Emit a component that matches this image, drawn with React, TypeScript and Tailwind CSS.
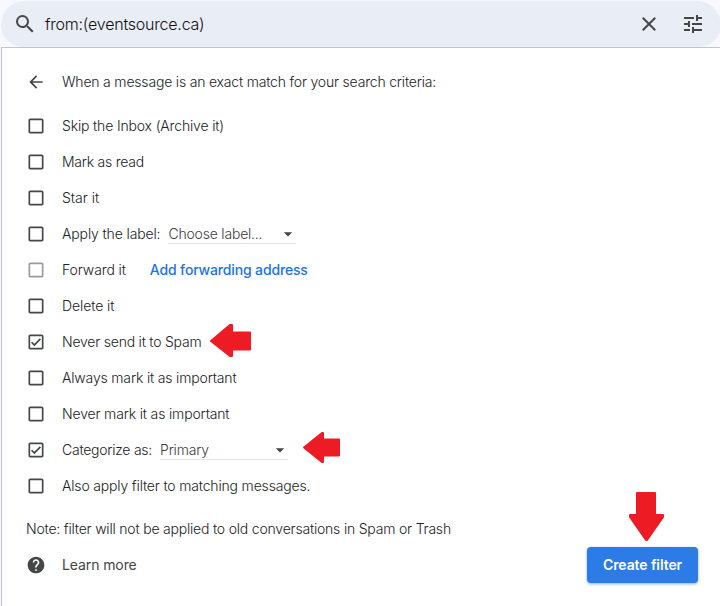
import type { ReactNode } from 'react';
import {
  MdArrowBack,
  MdArrowDropDown,
  MdCheckBoxOutlineBlank,
  MdClose,
  MdHelp,
  MdOutlineCheckBox,
  MdSearch,
  MdTune,
} from 'react-icons/md';

type RowProps = {
  label: string;
  tracking: string;
  checked?: boolean;
  disabled?: boolean;
  children?: ReactNode;
};

function Row({ label, tracking, checked, disabled, children }: RowProps) {
  const Box = checked ? MdOutlineCheckBox : MdCheckBoxOutlineBlank;

  return (
    <div className="flex h-9 items-center">
      <Box className={`mr-4 size-5 shrink-0 ${disabled ? 'text-[#9b9b9b]' : 'text-[#444746]'}`} />
      <span className={`whitespace-nowrap ${tracking}`}>{label}</span>
      {children}
    </div>
  );
}

function Select({ value }: { value: string }) {
  return (
    <div className="ml-2 flex h-5 w-32 items-center justify-between border-b border-[#e4e4e4] tracking-[-0.2px] text-[#3c3c3c]">
      <span className="whitespace-nowrap">{value}</span>
      <MdArrowDropDown className="-mr-0.5 size-5 text-[#444746]" />
    </div>
  );
}

function Arrow({ points, className }: { points: string; className: string }) {
  return (
    <svg className={`absolute overflow-visible ${className}`} fill="#ed1c24" stroke="#ed1c24" strokeWidth="2" strokeLinejoin="round">
      <polygon points={points} />
    </svg>
  );
}

export default function App() {
  return (
    <div className="relative flex h-[606px] w-[720px] flex-col overflow-hidden bg-[#f7f9fe] pt-px font-['Inter',sans-serif] text-sm font-light text-[#222222]">
      <div className="ml-px flex h-[46px] w-[720px] shrink-0 items-center rounded-[24px] rounded-b-[22px] bg-[#e9edf6] pl-3 pr-4 text-[#444746]">
        <MdSearch className="size-6" />
        <span className="ml-2 flex-1 text-base tracking-[-0.22px] text-[#111111]">from:(eventsource.ca)</span>
        <MdClose className="mr-5 size-6" />
        <MdTune className="size-6" />
      </div>

      <div className="ml-px flex flex-1 flex-col border-l border-t border-[#c4c5ca] bg-white pl-6 pt-4">
        <div className="mb-2 flex h-9 items-center">
          <MdArrowBack className="mr-4 size-5 text-[#444746]" />
          <span className="tracking-[-0.19px]">When a message is an exact match for your search criteria:</span>
        </div>

        <Row label="Skip the Inbox (Archive it)" tracking="tracking-[-0.16px]" />
        <Row label="Mark as read" tracking="tracking-[-0.25px]" />
        <Row label="Star it" tracking="tracking-[-0.02px]" />
        <Row label="Apply the label:" tracking="tracking-[-0.13px]">
          <Select value="Choose label..." />
        </Row>
        <Row label="Forward it" tracking="tracking-[-0.1px]" disabled>
          <span className="ml-6 font-medium tracking-[-0.15px] text-[#1a73e8]">Add forwarding address</span>
        </Row>
        <Row label="Delete it" tracking="tracking-[-0.1px]" />
        <Row label="Never send it to Spam" tracking="tracking-[-0.22px]" checked />
        <Row label="Always mark it as important" tracking="tracking-[-0.17px]" />
        <Row label="Never mark it as important" tracking="tracking-[-0.16px]" />
        <Row label="Categorize as:" tracking="tracking-[-0.25px]" checked>
          <Select value="Primary" />
        </Row>
        <Row label="Also apply filter to matching messages." tracking="tracking-[-0.17px]" />

        <p className="mt-[15px] leading-5 tracking-[-0.2px]">
          Note: filter will not be applied to old conversations in Spam or Trash
        </p>

        <div className="mt-2 flex h-9 items-center pr-[22px]">
          <MdHelp className="mr-4 size-5 text-[#444746]" />
          <span className="font-normal tracking-[-0.1px] text-[#444444]">Learn more</span>
          <button className="ml-auto h-9 w-[111px] rounded bg-[#2b7ce6] font-semibold tracking-[-0.1px] text-white shadow-[0_1px_3px_rgba(43,124,230,0.6)]">
            Create filter
          </button>
        </div>
      </div>

      <Arrow className="left-[210px] top-[324px] h-[33px] w-[41px]" points="1,17 20,1 22,1 22,8.5 40,8.5 40,25.5 22,25.5 22,32 20,32" />
      <Arrow className="left-[303px] top-[432px] h-[31px] w-[37px]" points="1,15.5 19,1 20,1 20,7.5 36,7.5 36,23.5 20,23.5 20,30 19,30" />
      <Arrow className="left-[629px] top-[492px] h-[49px] w-[35px]" points="8,1 26,1 26,23 34,23 34,25 18,48 17,48 1,25 1,23 8,23" />
    </div>
  );
}
